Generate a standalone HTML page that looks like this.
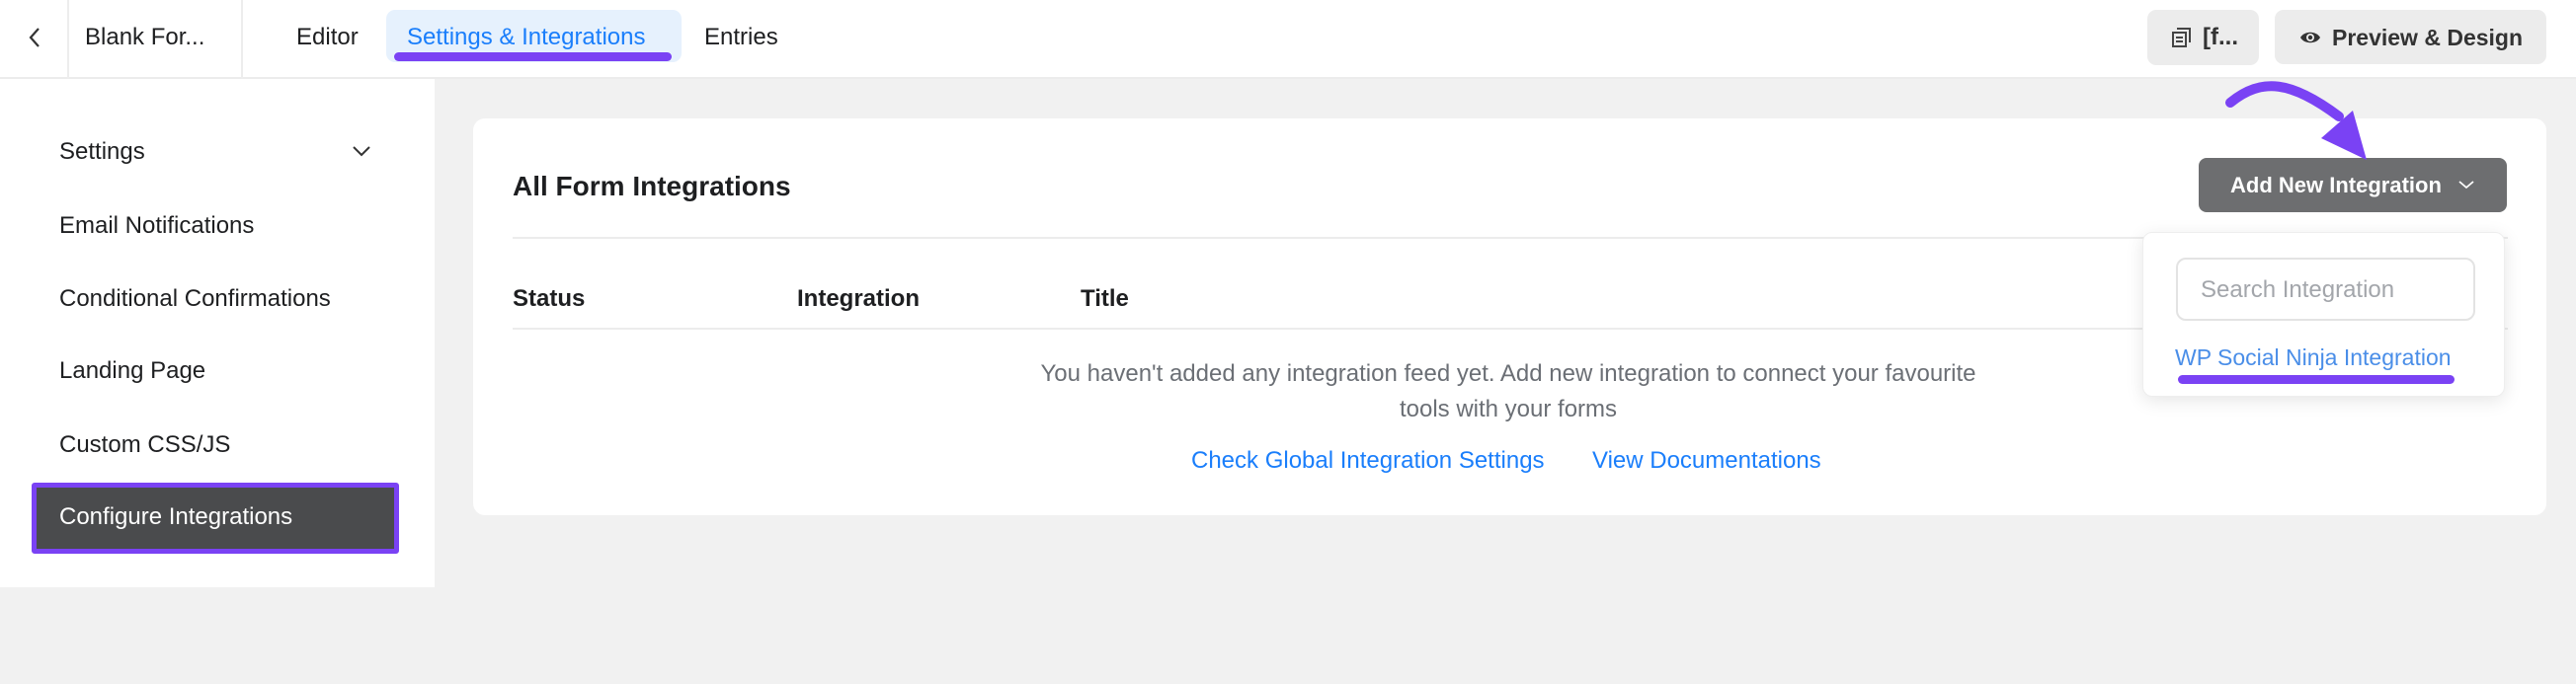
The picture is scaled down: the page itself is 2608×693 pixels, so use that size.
<!DOCTYPE html>
<html><head><meta charset="utf-8"><style>
*{box-sizing:border-box;margin:0;padding:0}
body{width:2608px;height:693px;background:#f1f1f1;font-family:"Liberation Sans",sans-serif;position:relative;overflow:hidden;color:#1e1f21}
.a{position:absolute;white-space:nowrap}
.hdr{left:0;top:0;width:2608px;height:80px;background:#fff;border-bottom:2px solid #ececec}
.t{font-size:24px;line-height:24px}
.side{left:0;top:80px;width:440px;height:515px;background:#fff}
.card{left:479px;top:120px;width:2099px;height:402px;background:#fff;border-radius:12px}
.line{height:2px;background:#ececec}
.blue{color:#1a7efb}
</style></head><body>
<div class="a hdr"></div>
<div class="a" style="left:68px;top:0;width:2px;height:80px;background:#ededed"></div>
<div class="a" style="left:244px;top:0;width:2px;height:80px;background:#ededed"></div>
<svg class="a" style="left:28px;top:26px" width="14" height="24" viewBox="0 0 14 24"><path d="M11 3 L3 12 L11 21" fill="none" stroke="#333" stroke-width="2.2"/></svg>
<div class="a t" style="left:86px;top:26px">Blank For...</div>
<div class="a t" style="left:300px;top:26px">Editor</div>
<div class="a" style="left:391px;top:10px;width:299px;height:53px;background:#e6f1fd;border-radius:9px"></div>
<div class="a t blue" style="left:412px;top:26px">Settings &amp; Integrations</div>
<div class="a" style="left:399px;top:53px;width:281px;height:9px;background:#7a42f4;border-radius:5px"></div>
<div class="a t" style="left:713px;top:26px">Entries</div>
<div class="a" style="left:2174px;top:10px;width:113px;height:56px;background:#ececec;border-radius:9px"></div>
<svg class="a" style="left:2198px;top:27px" width="22" height="22" viewBox="0 0 22 22"><rect x="2" y="6" width="13" height="14" fill="none" stroke="#444" stroke-width="2"/><path d="M6 2H19V16" fill="none" stroke="#444" stroke-width="2"/><path d="M5 11H12M5 15H12" stroke="#444" stroke-width="2"/></svg>
<div class="a t" style="left:2230px;top:26px;color:#333;font-weight:bold">[f...</div>
<div class="a" style="left:2303px;top:10px;width:275px;height:55px;background:#ececec;border-radius:9px"></div>
<svg class="a" style="left:2328px;top:29px" width="22" height="18" viewBox="0 0 22 18"><path d="M1 9C5 2 17 2 21 9C17 16 5 16 1 9Z" fill="#333"/><circle cx="11" cy="9" r="4" fill="#ececec"/><circle cx="11" cy="9" r="2.2" fill="#333"/></svg>
<div class="a t" style="left:2361px;top:26px;color:#333;font-weight:bold;font-size:23px">Preview &amp; Design</div>

<div class="a side"></div>
<div class="a t" style="left:60px;top:142px">Settings</div>
<svg class="a" style="left:356px;top:146px" width="20" height="14" viewBox="0 0 20 14"><path d="M2 3L10 11L18 3" fill="none" stroke="#333" stroke-width="2"/></svg>
<div class="a t" style="left:60px;top:217px">Email Notifications</div>
<div class="a t" style="left:60px;top:291px">Conditional Confirmations</div>
<div class="a t" style="left:60px;top:364px">Landing Page</div>
<div class="a t" style="left:60px;top:439px">Custom CSS/JS</div>
<div class="a" style="left:32px;top:489px;width:372px;height:72px;background:#4a4b4d;border:5px solid #7a42f4;border-radius:3px"></div>
<div class="a t" style="left:60px;top:512px;color:#fff">Configure Integrations</div>

<div class="a card"></div>
<div class="a" style="left:519px;top:173px;font-size:28px;font-weight:bold;color:#1e1f21">All Form Integrations</div>
<div class="a line" style="left:519px;top:240px;width:2020px"></div>
<div class="a t" style="left:519px;top:291px;font-weight:bold">Status</div>
<div class="a t" style="left:807px;top:291px;font-weight:bold">Integration</div>
<div class="a t" style="left:1094px;top:291px;font-weight:bold">Title</div>
<div class="a line" style="left:519px;top:332px;width:2020px"></div>
<div class="a t" style="left:1027px;top:361px;width:1000px;text-align:center;color:#6b6f75;line-height:36px;white-space:normal">You haven't added any integration feed yet. Add new integration to connect your favourite tools with your forms</div>
<div class="a t blue" style="left:1206px;top:455px">Check Global Integration Settings</div>
<div class="a t blue" style="left:1612px;top:455px">View Documentations</div>

<div class="a" style="left:2226px;top:160px;width:312px;height:55px;background:#6d6e70;border-radius:8px"></div>
<div class="a" style="left:2258px;top:176px;color:#fff;font-weight:bold;font-size:22px;line-height:24px">Add New Integration</div>
<svg class="a" style="left:2488px;top:181px" width="18" height="12" viewBox="0 0 18 12"><path d="M2 3L9 9L16 3" fill="none" stroke="#fff" stroke-width="1.8"/></svg>

<div class="a" style="left:2169px;top:235px;width:367px;height:167px;background:#fff;border-radius:10px;box-shadow:0 4px 18px rgba(0,0,0,.1);border:1px solid #eee"></div>
<div class="a" style="left:2203px;top:261px;width:303px;height:64px;border:2px solid #e3e3e3;border-radius:10px"></div>
<div class="a t" style="left:2228px;top:282px;color:#a3a6ab">Search Integration</div>
<div class="a t" style="left:2202px;top:350px;color:#4a8ee8;font-size:23px">WP Social Ninja Integration</div>
<div class="a" style="left:2205px;top:380px;width:280px;height:9px;background:#7a42f4;border-radius:5px"></div>

<svg class="a" style="left:0;top:0" width="2608" height="693"><path d="M2258 104 C2290 78 2320 82 2368 118" fill="none" stroke="#7a42f4" stroke-width="10" stroke-linecap="round"/><path d="M2350 140 L2382 112 L2396 162 Z" fill="#7a42f4"/></svg>
</body></html>
